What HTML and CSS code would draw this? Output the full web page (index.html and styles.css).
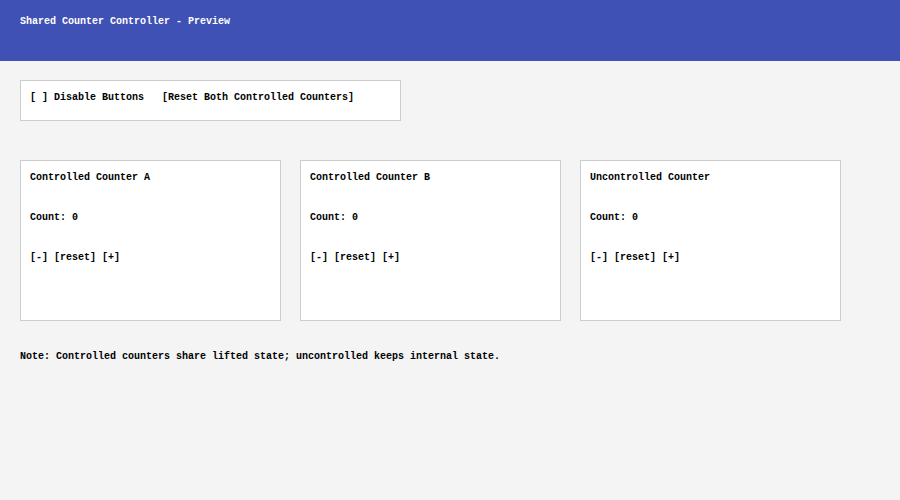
FILE: index.html
```html
<!DOCTYPE html>
<html>
<head>
<meta charset="utf-8">
<link rel="stylesheet" href="styles.css">
</head>
<body>
<header class="topbar">Shared Counter Controller - Preview</header>
<main class="content">
  <section class="controls">
    <span class="toggle">[ ] Disable Buttons</span>
    <span class="reset-all">[Reset Both Controlled Counters]</span>
  </section>
  <section class="cards">
    <div class="card">
      <div class="line">Controlled Counter A</div>
      <div class="line">Count: 0</div>
      <div class="line">[-] [reset] [+]</div>
    </div>
    <div class="card">
      <div class="line">Controlled Counter B</div>
      <div class="line">Count: 0</div>
      <div class="line">[-] [reset] [+]</div>
    </div>
    <div class="card">
      <div class="line">Uncontrolled Counter</div>
      <div class="line">Count: 0</div>
      <div class="line">[-] [reset] [+]</div>
    </div>
  </section>
  <p class="note">Note: Controlled counters share lifted state; uncontrolled keeps internal state.</p>
</main>
</body>
</html>
```
FILE: styles.css
```css
* { box-sizing: border-box; }
html, body { margin: 0; padding: 0; }
body {
  background: #f4f4f4;
  font-family: "Liberation Mono", "DejaVu Sans Mono", monospace;
  font-size: 10px;
  font-weight: bold;
  line-height: 12px;
  color: #000;
  -webkit-font-smoothing: none;
}
.topbar {
  height: 61px;
  background: #3f51b5;
  color: #fff;
  padding: 16px 20px 0;
}
.content {
  padding: 19px 20px 0;
}
.controls {
  width: 381px;
  height: 41px;
  background: #fff;
  border: 1px solid #cccccc;
  padding: 11px 9px 0;
  display: flex;
  gap: 18px;
}
.cards {
  display: flex;
  gap: 19px;
  margin-top: 39px;
}
.card {
  width: 261px;
  height: 161px;
  background: #fff;
  border: 1px solid #cccccc;
  padding: 11px 9px 0;
  display: flex;
  flex-direction: column;
  gap: 28px;
}
.note {
  margin: 30px 0 0;
}
```
